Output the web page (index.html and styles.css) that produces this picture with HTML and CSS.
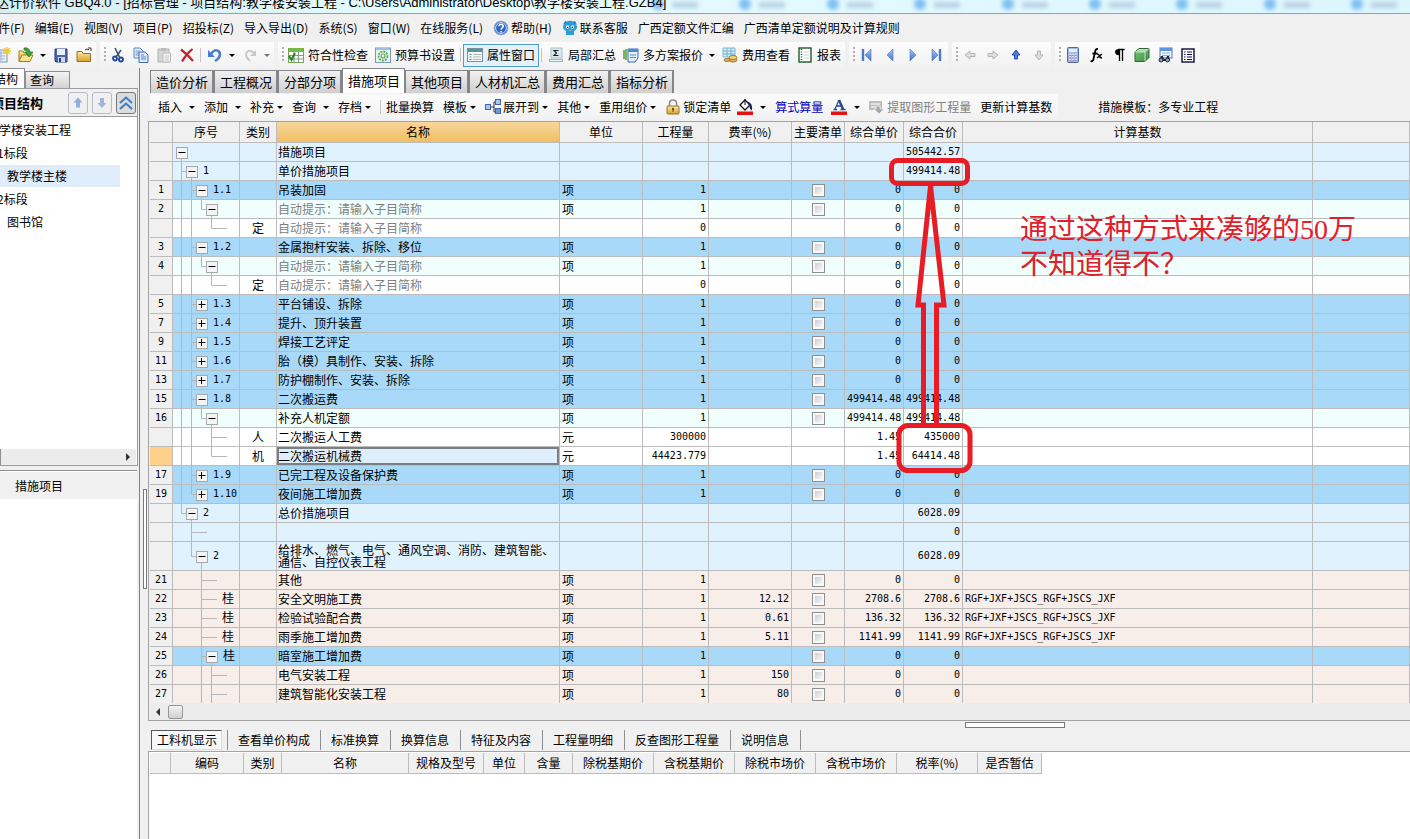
FILE: index.html
```html
<!DOCTYPE html>
<html lang="zh-CN">
<head>
<meta charset="utf-8">
<title>广联达计价软件 GBQ4.0</title>
<link rel="stylesheet" href="styles.css">
</head>
<body>
<svg class="defs" width="0" height="0" aria-hidden="true">
  <defs>
    <linearGradient id="blue" x1="0" y1="0" x2="0" y2="1"><stop offset="0" stop-color="#a9c8f5"/><stop offset="1" stop-color="#3a6fcc"/></linearGradient>
    <linearGradient id="gold" x1="0" y1="0" x2="0" y2="1"><stop offset="0" stop-color="#fbe9a0"/><stop offset="1" stop-color="#d9a02e"/></linearGradient>
    <linearGradient id="green" x1="0" y1="0" x2="1" y2="1"><stop offset="0" stop-color="#7cc47c"/><stop offset="1" stop-color="#3f8f46"/></linearGradient>
    <filter id="soft" x="-20%" y="-50%" width="140%" height="200%"><feGaussianBlur stdDeviation="2"/></filter>
    <g id="tabblur"><circle cx="8" cy="4" r="6" fill="#7fc0f2"/><rect x="22" y="2" width="26" height="6" fill="#b9d3e6"/></g>
  </defs>
</svg>

<header class="titlebar">
  <svg class="titleblur" width="780" height="13" aria-hidden="true"><g filter="url(#soft)"><use href="#tabblur" x="20"/><use href="#tabblur" x="107"/><use href="#tabblur" x="195"/><use href="#tabblur" x="282"/><use href="#tabblur" x="370"/><use href="#tabblur" x="457"/><use href="#tabblur" x="544"/><use href="#tabblur" x="632"/><use href="#tabblur" x="719"/></g></svg>
  <h1>广联达计价软件 GBQ4.0 - [招标管理 - 项目结构:教学楼安装工程 - C:\Users\Administrator\Desktop\教学楼安装工程.GZB4]</h1>
</header>

<nav class="menubar">
  <button>文件(F)</button><button>编辑(E)</button><button>视图(V)</button><button>项目(P)</button><button>招投标(Z)</button><button>导入导出(D)</button><button>系统(S)</button><button>窗口(W)</button><button>在线服务(L)</button>
  <button><svg width="16" height="16"><circle cx="8" cy="8" r="7" fill="#2f66c4" stroke="#9fb4d8"/><circle cx="8" cy="8" r="5.4" fill="none" stroke="#cfe0f8"/><path d="M6 6.3c0-2.8 4.3-2.6 4.2 0 0 1.400-2.100 1.600-2.100 3.200M8.100 11v1.500" fill="none" stroke="#fff" stroke-width="1.600"/></svg>帮助(H)</button>
  <button><svg width="16" height="16"><path d="M1 6l3-4q4-2.500 8 0l3 4q0 4-3 5v4H4v-4Q1 10 1 6z" fill="#2b9bdc"/><path d="M1 5L3 1l2 1zM15 5l-2-4-2 1z" fill="#1779b8"/><circle cx="5.500" cy="7" r="1.700" fill="#fff"/><circle cx="10.500" cy="7" r="1.700" fill="#fff"/><circle cx="5.700" cy="7.200" r=".8" fill="#123"/><circle cx="10.300" cy="7.200" r=".8" fill="#123"/><path d="M7 10h2l-1 1.500z" fill="#f6c04a"/></svg>联系客服</button>
  <button>广西定额文件汇编</button><button>广西清单定额说明及计算规则</button>
</nav>

<div class="toolbar">
  <div class="group first">
    <button aria-label="新建"><svg width="16" height="16"><rect x="2" y="3" width="10" height="12" fill="#eaf2fb" stroke="#7d93b5"/><path d="M4 6h6M4 9h6M4 12h6M6 4v10" stroke="#9db3d3"/><path d="M12 0v8M8 4h8M9 1l6 6M15 1L9 7" stroke="#f2c72e" stroke-width="1.300"/></svg></button>
    <button aria-label="打开"><svg width="16" height="16"><path d="M1 14V4h4l1 2h5v8z" fill="url(#gold)" stroke="#a97d1b"/><path d="M1 14.500L4 8h11l-3 6.500z" fill="#fbe391" stroke="#a97d1b"/><path d="M6 1q5-1 6 4h3l-4 5-4-5h2Q9 3 6 3z" fill="#3aa53a" stroke="#1d7222" stroke-width=".7"/></svg></button>
    <span class="caret"></span>
    <button aria-label="保存"><svg width="16" height="16"><path d="M2 2h12v13H3l-1-1z" fill="#4a66a8" stroke="#2a3f77"/><rect x="4" y="2" width="8" height="6" fill="#e9eefa"/><rect x="5" y="10" width="7" height="5" fill="#cdd6ea"/><rect x="6" y="11" width="2" height="4" fill="#2a3f77"/></svg></button>
    <button aria-label="关闭工程"><svg width="16" height="16"><path d="M1 14.500V4.500h5l1 2h7.500v8z" fill="url(#gold)" stroke="#94722a"/><path d="M9 3q2-2 4 0M12 1h3v3" fill="none" stroke="#333"/></svg></button>
  </div>
  <div class="group">
    <span class="grip"></span>
    <button aria-label="剪切"><svg width="16" height="16"><path d="M5 1l4.500 9M11 3L6 10" stroke="#394b6b" stroke-width="1.500" fill="none"/><circle cx="5" cy="11.500" r="2" fill="none" stroke="#1f46a0" stroke-width="1.800"/><circle cx="11" cy="12.500" r="2" fill="none" stroke="#1f46a0" stroke-width="1.800"/></svg></button>
    <button aria-label="复制"><svg width="16" height="16"><path d="M1 1h6l3 3v7H1z" fill="#e4eefb" stroke="#5f86bf"/><path d="M2.500 4h4M2.500 6h5M2.500 8h5" stroke="#6d94cd"/><path d="M6 5h6l3 3v7.500H6z" fill="#dbe9fb" stroke="#3f6cb0"/><path d="M8 8h3M8 10h5M8 12h5" stroke="#5a87c9"/></svg></button>
    <button aria-label="粘贴"><svg width="16" height="16"><rect x="2" y="2" width="11" height="13" fill="#d5d5d5" stroke="#b2b2b2"/><rect x="5" y="1" width="5" height="3" fill="#bbb"/><path d="M7 6h7.500v9H7z" fill="#f2f2f2" stroke="#bcbcbc"/><path d="M9 9h4M9 11h4M9 13h4" stroke="#c8c8c8"/></svg></button>
    <button aria-label="删除"><svg width="16" height="16"><path d="M2 2.500Q8 7 14 14M13.500 2Q7 7 3 14.500" stroke="#c8202c" stroke-width="2.200" fill="none"/></svg></button>
    <span class="sep"></span>
    <button aria-label="撤销"><svg width="16" height="16"><path d="M4 7Q8 1 12 4.500q3 5-4 9.500" fill="none" stroke="#4a7bd0" stroke-width="2.600"/><path d="M1 3v7h7z" fill="#4a7bd0"/></svg></button>
    <span class="caret"></span>
    <button aria-label="恢复"><svg width="16" height="16"><path d="M12 6Q8 2 5 5q-3 4 3 9" fill="none" stroke="#c9c9c9" stroke-width="2"/><path d="M14 3v6H8z" fill="#c9c9c9"/></svg></button>
    <span class="caret dim"></span>
  </div>
  <div class="group">
    <span class="grip"></span>
    <button><svg width="16" height="16"><rect x=".5" y="1.500" width="15" height="14" fill="#fff" stroke="#7aa35a"/><rect x="1" y="1" width="14" height="4" fill="#78b943"/><path d="M1 8.500h14M1 12h14M6 5v10M10.500 5v10" stroke="#7e9d8a"/><path d="M1 9l2.500 4L7 6" stroke="#228b22" stroke-width="2" fill="none"/></svg>符合性检查</button>
    <button><svg width="16" height="16"><rect x=".5" y="1" width="15" height="14.500" fill="#e9f5ef" stroke="#7a9ab5"/><rect x="1" y="1" width="14" height="2" fill="#9cc0e2"/><circle cx="8" cy="9" r="4.500" fill="none" stroke="#5ba75d" stroke-width="1.800" stroke-dasharray="2 1"/><circle cx="8" cy="9" r="2" fill="none" stroke="#5ba75d" stroke-width="1.200"/></svg>预算书设置</button>
    <span class="sep"></span>
    <button class="pressed" aria-pressed="true"><svg width="16" height="16"><rect x=".5" y="1.500" width="15" height="13" fill="#f7f9fa" stroke="#7b8f9e"/><rect x="1" y="2" width="14" height="3" fill="#4c9a9a"/><path d="M2.500 7.500h2M2.500 10h2M2.500 12.500h2" stroke="#4c8f60"/><path d="M6 7.500h8M6 10h8M6 12.500h8" stroke="#aab7bf"/></svg>属性窗口</button>
    <span class="sep"></span>
    <button><svg width="16" height="16"><path d="M3 1h11v10H3z" fill="#d8e9ee" stroke="#a8c4cc"/><path d="M10.500 3.500H6l2.500 2.500L6 8.500h4.500" fill="none" stroke="#222" stroke-width="1.200"/><path d="M1 12h14v3H1z" fill="#86bfcb"/><path d="M2 13.500h12" stroke="#e9f6f8"/></svg>局部汇总</button>
    <button><svg width="16" height="16"><path d="M1 3v9M3 2v11" stroke="#4f9d3b" stroke-width="1.500"/><path d="M5 2h10v9l-3 4H5z" fill="#e2eefb" stroke="#3c6ea8"/><path d="M5 2h10v3H5z" fill="#4d8bd4"/><path d="M7 8h6M7 10.500h6" stroke="#5c8ec6"/></svg>多方案报价</button>
    <span class="caret"></span>
    <button><svg width="16" height="16"><path d="M1 1h12v9H1z" fill="#d6edf6" stroke="#7db6d4"/><path d="M1 4h12M1 7h12M5 1v9M9 1v9" stroke="#6fb0d2"/><ellipse cx="11" cy="13" rx="4" ry="2" fill="#e0b45a" stroke="#a57a28"/><ellipse cx="11" cy="10.500" rx="4" ry="2" fill="#f3d487" stroke="#a57a28"/><ellipse cx="5" cy="13" rx="3" ry="1.500" fill="#e0b45a" stroke="#a57a28"/></svg>费用查看</button>
    <button><svg width="16" height="16"><rect x="2" y="1" width="12" height="14" fill="#fff" stroke="#1f5a2a" stroke-width="1.400"/><path d="M4.500 2v12" stroke="#1f5a2a" stroke-dasharray="1 1.500" stroke-width="1.500"/><path d="M7 5h5M7 8h5M7 11h5" stroke="#c8d2dc"/></svg>报表</button>
  </div>
  <div class="group">
    <span class="grip"></span>
    <button aria-label="首行"><svg width="16" height="16"><path d="M4 2v12" stroke="#4a78c8" stroke-width="2.400"/><path d="M12 2v12L6 8z" fill="url(#blue)" stroke="#5a83c8" stroke-width=".7"/></svg></button>
    <button aria-label="上一行"><svg width="16" height="16"><path d="M11 2v12L5 8z" fill="url(#blue)" stroke="#5a83c8" stroke-width=".7"/></svg></button>
    <button aria-label="下一行"><svg width="16" height="16"><path d="M5 2v12l6-6z" fill="url(#blue)" stroke="#5a83c8" stroke-width=".7"/></svg></button>
    <button aria-label="末行"><svg width="16" height="16"><path d="M12 2v12" stroke="#4a78c8" stroke-width="2.400"/><path d="M4 2v12l6-6z" fill="url(#blue)" stroke="#5a83c8" stroke-width=".7"/></svg></button>
  </div>
  <div class="group">
    <span class="grip"></span>
    <button aria-label="左移"><svg width="16" height="16"><path d="M3 8l5-4v2.500h5v3H8V12z" fill="#ddd" stroke="#b5b5b5"/></svg></button>
    <button aria-label="右移"><svg width="16" height="16"><path d="M13 8L8 4v2.500H3v3h5V12z" fill="#ddd" stroke="#b5b5b5"/></svg></button>
    <button aria-label="上移"><svg width="16" height="16"><path d="M8 3l4 5H9.500v4h-3V8H4z" fill="#4c7be0" stroke="#2a50b0"/></svg></button>
    <button aria-label="下移"><svg width="16" height="16"><path d="M8 13l4-5H9.500V4h-3v4H4z" fill="#ddd" stroke="#b5b5b5"/></svg></button>
  </div>
  <div class="group">
    <span class="grip"></span>
    <button aria-label="计算器"><svg width="16" height="16"><rect x="2.500" y=".5" width="11" height="15" rx="1" fill="#9db9e6" stroke="#4a68a6"/><rect x="4" y="2" width="8" height="3" fill="#e8f1fb"/><path d="M4.500 7.500h8M4.500 10h8M4.500 12.500h8" stroke="#fff" stroke-width="1.500" stroke-dasharray="1.500 1.300"/><path d="M4.500 8.300h8M4.500 10.800h8M4.500 13.300h8" stroke="#c24c58" stroke-width=".8" stroke-dasharray="1.500 1.300"/></svg></button>
    <button aria-label="函数"><svg width="16" height="16"><path d="M10 2Q7.500 1.500 7 5L5.500 12Q5 15 2.500 14M4.500 6.500h5" fill="none" stroke="#000" stroke-width="1.800"/><path d="M9 7q2 0 2.500 2t2.500 2M14 7l-5 4" fill="none" stroke="#000" stroke-width="1.400"/></svg></button>
    <button aria-label="段落标记"><svg width="16" height="16"><path d="M8.500 2v12M11.500 2v12M7 2.500h6.500" stroke="#000" stroke-width="1.300" fill="none"/><path d="M8.500 2v6.500Q4 8 4 5t4.500-3z"/></svg></button>
    <button aria-label="三维"><svg width="16" height="16"><path d="M1 5l4-3.500h10v9L11 14.500H1z" fill="url(#green)" stroke="#2d6a35"/><path d="M1 5h10v9.500M11 5l4-3.500" fill="none" stroke="#dff0df" stroke-width=".8"/><path d="M1.500 5L5 2h9.500L11 5z" fill="#b4dcb2"/></svg></button>
    <button aria-label="查找"><svg width="16" height="16"><rect x="3" y="1" width="12" height="10" fill="#eef5fd" stroke="#4f7cc0"/><rect x="3" y="1" width="12" height="3" fill="#5f93dc"/><path d="M5 6h8M5 8.500h8" stroke="#8fb1dc"/><path d="M2 14l2-5h2l1 3h2l1-3h2l1 5z" fill="#222a3a"/><circle cx="4" cy="13" r="2" fill="#8fa2c4" stroke="#222a3a"/><circle cx="10.500" cy="13" r="2" fill="#8fa2c4" stroke="#222a3a"/></svg></button>
    <button aria-label="列表"><svg width="16" height="16"><rect x="2" y="2" width="12" height="13" fill="#fff" stroke="#0b0b3a" stroke-width="1.400"/><path d="M4 5h1.500M4 7.500h1.500M4 10h1.500M4 12.500h1.500M7 5h5M7 7.500h5M7 10h5M7 12.500h5" stroke="#0b0b6a" stroke-width="1.200"/></svg></button>
  </div>
</div>

<div class="main">
  <aside class="sidebar">
    <div class="sidetabs"><button class="on">项目结构</button><button>查询</button></div>
    <section class="project">
      <div class="projecthead">
        <h2>项目结构</h2>
        <button aria-label="上移"><svg width="16" height="16"><path d="M8 2.500l4.500 5H10v5H6v-5H3.500z" fill="#8fb0dc"/></svg></button>
        <button aria-label="下移"><svg width="16" height="16"><path d="M8 13l4.500-5H10V3H6v5H3.500z" fill="#a3b4dc"/></svg></button>
        <button class="fold" aria-label="折叠"><svg width="16" height="16"><path d="M2 8l6-5.500L14 8M2 14l6-5.500L14 14" fill="none" stroke="#3d7fc0" stroke-width="2"/></svg></button>
      </div>
      <ul class="projecttree">
        <li class="root">教学楼安装工程</li>
        <li class="part">1标段</li>
        <li class="unit on">教学楼主楼</li>
        <li class="part">2标段</li>
        <li class="unit">图书馆</li>
      </ul>
      <div class="sidescroll"><i class="right"></i></div>
    </section>
    <section class="items"><button>措施项目</button></section>
  </aside>

  <div class="vsplit"><i></i></div>

  <main class="work">
    <div class="tabs"><button>造价分析</button><button>工程概况</button><button>分部分项</button><button class="on">措施项目</button><button>其他项目</button><button>人材机汇总</button><button>费用汇总</button><button>指标分析</button></div>
    <div class="subbar">
      <div class="commands">
        <button class="loose">插入<span class="caret"></span></button>
        <button class="loose">添加<span class="caret"></span></button>
        <button>补充<span class="caret"></span></button>
        <button class="loose">查询<span class="caret"></span></button>
        <button>存档<span class="caret"></span></button>
        <span class="sep"></span>
        <button class="plain">批量换算</button>
        <button>模板<span class="caret"></span></button>
        <button><svg width="16" height="16"><path d="M5 8h4M9 3v10M9 3h2M9 13h2" stroke="#334" fill="none"/><rect x=".5" y="5.500" width="5" height="5" fill="#a9c6ee" stroke="#3f66a8"/><rect x="10.500" y=".5" width="5" height="5" fill="#a9c6ee" stroke="#3f66a8"/><rect x="10.500" y="9.500" width="5" height="5" fill="#6f97d8" stroke="#3f66a8"/></svg>展开到<span class="caret"></span></button>
        <button>其他<span class="caret"></span></button>
        <button>重用组价<span class="caret"></span></button>
        <button><svg width="16" height="16"><path d="M4.500 7V4.500q0-3.500 3.500-3.500t3.500 3.500V7" fill="none" stroke="#8c8c8c" stroke-width="1.600"/><rect x="2" y="7" width="12" height="8" rx="1" fill="url(#gold)" stroke="#94722a"/><circle cx="8" cy="10" r="1.200" fill="#6b4c10"/><path d="M8 10v3" stroke="#6b4c10"/></svg>锁定清单</button>
        <button class="loose" aria-label="背景色"><svg width="16" height="16"><path d="M3 6l5-5 5 5-5 5z" fill="#fff" stroke="#111" stroke-width="1.300"/><path d="M8 6V0" stroke="#111"/><path d="M10 2.500q6 1 5 9-2.500-1-2.500-4z" fill="#16205c"/><rect y="12.500" width="16" height="3.500" fill="#e81010"/></svg><span class="caret"></span></button>
        <button class="formula">算式算量</button>
        <button class="loose" aria-label="文字颜色"><svg width="16" height="16"><path d="M4 10L8 1" fill="none" stroke="#27468c" stroke-width="1.200"/><path d="M8 1l4 9" fill="none" stroke="#27468c" stroke-width="2.400"/><path d="M5.500 7h5M2.500 10.500h3.500M9.500 10.500h5" fill="none" stroke="#27468c" stroke-width="1.300"/><rect y="12.500" width="16" height="3.500" fill="#e81010"/></svg><span class="caret"></span></button>
        <button class="plain" disabled><svg width="16" height="16"><path d="M0 2h13v9H0z" fill="#bdbdbd"/><path d="M2 5h9M2 8h5" stroke="#eee" stroke-width="1.500"/><path d="M7 7h4v3h4l-5 5-5-5h2z" fill="#a9a9a9" stroke="#eee" stroke-width=".8"/></svg>提取图形工程量</button>
        <button>更新计算基数</button>
      </div>
      <p>措施模板：多专业工程</p>
    </div>

    <section class="gridpane">
      <div class="gridview">
        <table class="grid">
          <colgroup><col class="w-num"><col class="w-tree"><col class="w-cat"><col class="w-name"><col class="w-unit"><col class="w-qty"><col class="w-rate"><col class="w-main"><col class="w-price"><col class="w-price"><col class="w-base"><col></colgroup>
          <thead><tr><th></th><th>序号</th><th>类别</th><th class="on">名称</th><th>单位</th><th>工程量</th><th>费率(%)</th><th>主要清单</th><th>综合单价</th><th>综合合价</th><th>计算基数</th><th></th></tr></thead>
          <tbody id="rows"></tbody>
        </table>
      </div>
      <div class="gridscroll"><i class="left"></i><b></b></div>
    </section>

    <div class="hsplit"><i></i></div>
    <div class="detailtabs"><button class="on">工料机显示</button><button>查看单价构成</button><button>标准换算</button><button>换算信息</button><button>特征及内容</button><button>工程量明细</button><button>反查图形工程量</button><button>说明信息</button></div>
    <section class="detail">
      <table>
        <colgroup><col class="d-20"><col class="d-73"><col class="d-38"><col class="d-127"><col class="d-75"><col class="d-41"><col class="d-48"><col class="d-81"><col class="d-81"><col class="d-81"><col class="d-81"><col class="d-81"><col class="d-64"></colgroup>
        <thead><tr><th></th><th>编码</th><th>类别</th><th>名称</th><th>规格及型号</th><th>单位</th><th>含量</th><th>除税基期价</th><th>含税基期价</th><th>除税市场价</th><th>含税市场价</th><th>税率(%)</th><th>是否暂估</th></tr></thead>
      </table>
    </section>
  </main>
</div>

<svg class="marks" width="84" height="317" aria-hidden="true">
  <g fill="none" stroke="#e81c24" stroke-width="5">
    <rect x="2.500" y="2.500" width="76" height="23" rx="6"/>
    <rect x="10" y="267.500" width="71" height="45" rx="9"/>
    <path d="M41.500 28L29 147h5.500v119M41.500 28L55 147h-7.500v119"/>
  </g>
</svg>
<p class="note">通过这种方式来凑够的50万<br>不知道得不？</p>
<script src="grid.js"></script>
</body>
</html>
```
FILE: styles.css
```css
* { box-sizing: border-box; }
body {
  margin: 0;
  height: 100vh;
  display: flex;
  flex-direction: column;
  position: relative;
  overflow: hidden;
  background: #f0f0f0;
  color: #000;
  font: 12px/18px "Noto Sans CJK SC", sans-serif;
}
button {
  font: inherit;
  color: inherit;
  background: none;
  border: 0;
  padding: 0;
  white-space: nowrap;
}
h1, h2, p, ul { margin: 0; padding: 0; }
svg { display: block; flex: none; }
.defs { position: absolute; }

.titlebar {
  flex: none;
  display: flex;
  height: 14px;
  overflow: hidden;
  position: relative;
  background: linear-gradient(90deg, #d5eef0, #e6fbfd 30%, #dcf6fd);
  border-bottom: 1px solid #8fa3ae;
}
.titleblur { position: absolute; right: 0; top: 0; }
.titlebar h1 {
  position: relative;
  margin-left: -30px;
  white-space: nowrap;
  font: 13px/6px "Liberation Sans", "Noto Sans CJK SC", sans-serif;
}

.menubar {
  flex: none;
  display: flex;
  align-items: center;
  gap: 10px;
  height: 28px;
  margin-left: -14px;
}
.menubar button { display: flex; align-items: center; gap: 2px; }

.toolbar { flex: none; display: flex; height: 26px; gap: 4px; }
.group {
  display: flex;
  align-items: center;
  padding-right: 1px;
  background: linear-gradient(#fcfcfc, #f1f1f1);
}
.group.first { margin-left: -9px; }
.group button {
  display: flex;
  align-items: center;
  gap: 4px;
  height: 24px;
  padding: 0 3px 0 4px;
}
.group button.pressed {
  height: 23px;
  background: #e2f1fb;
  border: 1px solid #4f9ace;
  padding: 0 3px;
}
.caret { display: flex; justify-content: center; width: 12px; }
.caret::after {
  content: "";
  border: 3px solid transparent;
  border-top-color: #000;
  border-bottom: 0;
}
.caret.dim::after { border-top-color: #777; }
.grip { display: flex; justify-content: flex-end; width: 6px; height: 16px; }
.grip::after {
  content: "";
  width: 2px;
  background: repeating-linear-gradient(#b0b0b0 0 2px, transparent 2px 4px);
}
.sep { display: flex; justify-content: center; width: 5px; height: 14px; }
.sep::after { content: ""; width: 1px; background: #c4c4c4; }

.main { flex: 1; min-height: 0; display: flex; }

.sidebar {
  width: 140px;
  flex: none;
  display: flex;
  flex-direction: column;
  overflow: hidden;
  border-right: 1px solid #7f8287;
}
.sidetabs { display: flex; align-items: flex-end; height: 20px; margin-left: -35px; }
.sidetabs button {
  height: 17px;
  padding: 0 4px;
  line-height: 16px;
  text-align: left;
  border: 1px solid #8e8f93;
  border-bottom: 0;
  background: linear-gradient(#f3f3f3, #d2d2d2);
}
.sidetabs button:last-child { width: 45px; }
.sidetabs .on { height: 20px; width: 60px; line-height: 17px; background: #fff; }
.project {
  flex: none;
  height: 378px;
  margin-right: 1px;
  display: flex;
  flex-direction: column;
  background: #fff;
  border: solid #9c9c9c;
  border-width: 1px 1px 1px 0;
}
.projecthead {
  display: flex;
  align-items: center;
  gap: 4px;
  height: 28px;
  margin-left: -9px;
  padding-right: 1px;
  background: #f0f0f0;
  border-bottom: 1px solid #9c9c9c;
}
.projecthead h2 { flex: 1; font-size: 13px; line-height: 20px; }
.projecthead button {
  width: 20px;
  height: 22px;
  display: grid;
  place-items: center;
  border: 1px solid #b9bcc6;
  border-radius: 3px;
}
.projecthead .fold { border-color: #77797e; background: #dcdcdc; }
.projecttree { flex: 1; list-style: none; padding: 2px 0; }
.projecttree li { height: 22px; line-height: 22px; margin: 0 17px 1px 0; white-space: nowrap; }
.projecttree .root { text-indent: -13px; }
.projecttree .part { text-indent: -3px; }
.projecttree .unit { text-indent: 7px; }
.projecttree .on { background: #dfedfb; }
.sidescroll {
  display: flex;
  align-items: center;
  justify-content: flex-end;
  height: 16px;
  padding-right: 6px;
  margin-right: 1px;
  background: #ececec;
  border-left: 1px solid #8e8f93;
}
i.right, i.left { border: 4px solid transparent; }
i.right { border-left-color: #333; border-right: 0; }
i.left { border-right-color: #333; border-left: 0; }
.items {
  flex: 1;
  margin: 4px 2px 0 0;
  padding-top: 1px;
  background: #fff;
  border-top: 1px solid #8e8f93;
}
.items button { display: block; width: 100%; height: 27px; padding-left: 15px; text-align: left; background: #f0f0f0; }

.vsplit { width: 8px; flex: none; display: flex; align-items: center; justify-content: flex-end; padding: 0 1px 0 0; }
.vsplit i { width: 4px; height: 100px; margin-top: 170px; background: #fff; border: 1px solid #77797e; }

.work { flex: 1; min-width: 0; display: flex; flex-direction: column; }
.tabs { flex: none; display: flex; align-items: flex-end; height: 25px; padding-left: 2px; }
.tabs button {
  height: 23px;
  padding: 0 4px 0 5px;
  font-size: 13px;
  line-height: 22px;
  border: 1px solid #85868a;
  border-bottom: 0;
  border-right-width: 2px;
  background: linear-gradient(#f1f1f1, #cfcfcf);
}
.tabs button.on { height: 25px; border-right-width: 1px; background: #fff; }
.subbar { flex: none; display: flex; align-items: center; gap: 40px; height: 28px; padding-left: 2px; }
.commands {
  display: flex;
  align-items: center;
  height: 26px;
  padding-left: 8px;
  background: linear-gradient(#fcfcfc, #f1f1f1);
}
.commands button { display: flex; align-items: center; padding-right: 6px; }
.commands .loose .caret { margin-left: 4px; }
.commands .plain { padding-right: 9px; }
.commands svg { margin-right: 2px; }
.commands .loose svg { margin-right: 0; }
.commands .formula { color: #0000c0; padding-right: 8px; }
.commands button:disabled { color: #808080; }
.commands .sep { width: 6px; justify-content: flex-start; }

.gridpane {
  flex: none;
  border: solid #a3a3a3;
  border-width: 1px 0 1px 1px;
  padding-left: 1px;
}
.gridview { height: 581px; overflow: hidden; }
.grid { width: 100%; table-layout: fixed; border-spacing: 0; }
.grid th, .grid td {
  height: 19px;
  padding: 0 2px;
  line-height: 18px;
  border: solid #bcbcbc;
  border-width: 0 1px 1px 0;
  white-space: nowrap;
}
.grid th { font-weight: 400; background: #f0f0f0; text-align: center; padding: 0; }
.grid thead th { height: 21px; line-height: 20px; }
.grid thead .on { background: linear-gradient(#f9d69c, #efbf62); }
.w-num { width: 23px; }
.w-tree { width: 67px; }
.w-cat { width: 37px; }
.w-name { width: 283px; }
.w-unit, .w-rate { width: 83px; }
.w-qty { width: 66px; }
.w-main { width: 53px; }
.w-price { width: 59px; }
.w-base { width: 350px; }
.grid tbody th, .grid .n, .grid .code, .grid .tree { font-family: "DejaVu Sans Mono", "Noto Sans CJK SC", monospace; font-size: 10px; }
.grid .n { text-align: right; }
.grid .cat, .grid .tick { text-align: center; }
.grid .name { padding-left: 1px; }
.grid .hint { color: #808080; }
.grid .tree { padding: 0; }
.tree div { display: flex; align-items: center; gap: 5px; }
.tree .cjk { font-size: 12px; }
.lines { fill: none; stroke: #b3b7ba; }
.lines rect { fill: #f4f4f4; stroke: #a9a9a9; }
.lines .sign { stroke: #000; }
.top { background: #e1f2ff; }
.item { background: #a8d9f9; }
.sub { background: #f0fffb; }
.leaf { background: #fff; }
.rate { background: #f7eee9; }
.grid .double td, .grid .double th { height: 29px; line-height: 12px; }
.grid .current th { background: #ffd08a; }
.grid .current .name { background: #dfeefb; box-shadow: 0 0 0 2px #7b7f84 inset; }
.tick input {
  appearance: none;
  display: block;
  width: 13px;
  height: 13px;
  margin: 0 auto;
  padding: 2px;
  border: 1px solid #8e8f8f;
  background: linear-gradient(135deg, #cbcfd5, #f6f6f6) content-box, linear-gradient(#f8f8f8, #f8f8f8);
}
.gridscroll { display: flex; align-items: center; height: 17px; padding-left: 6px; gap: 8px; background: #ececec; }
.gridscroll b { width: 15px; height: 14px; border: 1px solid #979797; border-radius: 2px; background: linear-gradient(#f3f3f3, #cfcfcf); }

.hsplit { flex: none; display: flex; justify-content: flex-end; height: 7px; padding: 1px 345px 0 0; }
.hsplit i { width: 100px; height: 6px; background: #fff; border: 1px solid #77797e; }
.detailtabs { flex: none; display: flex; align-items: center; height: 23px; padding-left: 3px; }
.detailtabs button { height: 20px; padding: 0 11px 0 10px; border-right: 1px solid #8e8f93; }
.detailtabs .on {
  padding: 0 4px 0 5px;
  margin-right: 5px;
  background: #f8f8f8;
  border: 1px solid #55575c;
  border-right-color: #ddd;
  border-bottom-color: #ddd;
}
.detailtabs .on + button { border-left: 1px solid #8e8f93; padding-right: 10px; }
.detail { flex: 1; background: #fff; border: solid #a3a3a3; border-width: 1px 0 0 1px; padding: 1px 0 0 1px; }
.detail table { table-layout: fixed; width: 892px; border-spacing: 0; }
.detail th {
  height: 21px;
  padding: 0;
  line-height: 20px;
  font-weight: 400;
  background: #f0f0f0;
  border: solid #bcbcbc;
  border-width: 0 1px 1px 0;
}
.d-20 { width: 21px; }
.d-73 { width: 73px; }
.d-38 { width: 38px; }
.d-127 { width: 127px; }
.d-75 { width: 75px; }
.d-41 { width: 41px; }
.d-48 { width: 48px; }
.d-81 { width: 81px; }
.d-64 { width: 64px; }

.marks { position: absolute; left: 889px; top: 158px; }
.note {
  position: absolute;
  left: 1020px;
  top: 212px;
  color: #e0202a;
  font: 28px/35px "Liberation Serif", "Noto Sans CJK SC", serif;
  white-space: nowrap;
}
```
FILE: grid.js
```js
const HINT = "自动提示：请输入子目简称";
// style, row number, depth, node (- open, + closed, . leaf), label, category, name, unit, quantity, rate, tick box, unit price, total, base
const data = [
  ["top", "", 0, "-", "", "", "措施项目", "", "", "", 0, "", "505442.57"],
  ["top", "", 1, "-", "1", "", "单价措施项目", "", "", "", 0, "", "499414.48"],
  ["item", 1, 2, "-", "1.1", "", "吊装加固", "项", 1, "", 1, 0, 0],
  ["sub", 2, 3, "-", "", "", HINT, "项", 1, "", 1, 0, 0],
  ["leaf", "", 4, ".", "", "定", HINT, "", 0, "", 0, 0, 0],
  ["item", 3, 2, "-", "1.2", "", "金属抱杆安装、拆除、移位", "项", 1, "", 1, 0, 0],
  ["sub", 4, 3, "-", "", "", HINT, "项", 1, "", 1, 0, 0],
  ["leaf", "", 4, ".", "", "定", HINT, "", 0, "", 0, 0, 0],
  ["item", 5, 2, "+", "1.3", "", "平台铺设、拆除", "项", 1, "", 1, 0, 0],
  ["item", 7, 2, "+", "1.4", "", "提升、顶升装置", "项", 1, "", 1, 0, 0],
  ["item", 9, 2, "+", "1.5", "", "焊接工艺评定", "项", 1, "", 1, 0, 0],
  ["item", 11, 2, "+", "1.6", "", "胎（模）具制作、安装、拆除", "项", 1, "", 1, 0, 0],
  ["item", 13, 2, "+", "1.7", "", "防护棚制作、安装、拆除", "项", 1, "", 1, 0, 0],
  ["item", 15, 2, "-", "1.8", "", "二次搬运费", "项", 1, "", 1, "499414.48", "499414.48"],
  ["sub", 16, 3, "-", "", "", "补充人机定额", "项", 1, "", 1, "499414.48", "499414.48"],
  ["leaf", "", 4, ".", "", "人", "二次搬运人工费", "元", "300000", "", 0, "1.45", "435000"],
  ["leaf current", "", 4, ".", "", "机", "二次搬运机械费", "元", "44423.779", "", 0, "1.45", "64414.48"],
  ["item", 17, 2, "+", "1.9", "", "已完工程及设备保护费", "项", 1, "", 1, 0, 0],
  ["item", 19, 2, "+", "1.10", "", "夜间施工增加费", "项", 1, "", 1, 0, 0],
  ["top", "", 1, "-", "2", "", "总价措施项目", "", "", "", 0, "", "6028.09"],
  ["top", "", 2, ".", "", "", "", "", "", "", 0, "", 0],
  ["top double", "", 2, "-", "2", "", "给排水、燃气、电气、通风空调、消防、建筑智能、<br>通信、自控仪表工程", "", "", "", 0, "", "6028.09"],
  ["rate", 21, 3, ".", "", "", "其他", "项", 1, "", 1, 0, 0],
  ["rate", 22, 3, ".", "桂", "", "安全文明施工费", "项", 1, "12.12", 1, "2708.6", "2708.6", "RGF+JXF+JSCS_RGF+JSCS_JXF"],
  ["rate", 23, 3, ".", "桂", "", "检验试验配合费", "项", 1, "0.61", 1, "136.32", "136.32", "RGF+JXF+JSCS_RGF+JSCS_JXF"],
  ["rate", 24, 3, ".", "桂", "", "雨季施工增加费", "项", 1, "5.11", 1, "1141.99", "1141.99", "RGF+JXF+JSCS_RGF+JSCS_JXF"],
  ["item", 25, 3, "-", "桂", "", "暗室施工增加费", "项", 1, "", 1, 0, 0],
  ["rate", 26, 4, ".", "", "", "电气安装工程", "项", 1, "150", 1, 0, 0],
  ["rate", 27, 4, ".", "", "", "建筑智能化安装工程", "项", 1, "80", 1, 0, 0],
];

// True when another row of this depth follows under the same parent.
function continues(index, depth) {
  for (let j = index + 1; j < data.length; j++) {
    if (data[j][2] < depth) return false;
    if (data[j][2] === depth) return true;
  }
  return depth > 2;
}

function treeLines(index) {
  const depth = data[index][2], node = data[index][3];
  const h = data[index][0].includes("double") ? 28 : 18;
  const mid = h / 2 + 0.5;
  const x = k => 8.5 + 10 * k;
  let path = "";
  for (let k = 0; k < depth; k++) {
    const more = continues(index, k + 1);
    if (more) path += `M${x(k)} 0V${h}`;
    else if (k === depth - 1) path += `M${x(k)} 0V${mid}`;
  }
  if (depth) path += `M${x(depth - 1)} ${mid}h${node === "." ? 16 : 6}`;
  if (node === "-") path += `M${x(depth)} ${mid + 6}V${h}`;
  const c = x(depth);
  const box = node === "." ? "" :
    `<rect x="${c - 5}" y="${mid - 5}" width="11" height="11"/><path class="sign" d="M${c - 3} ${mid}h7${node === "+" ? `M${c} ${mid - 3.5}v7` : ""}"/>`;
  const width = node === "." ? 10 * depth + 14 : 10 * depth + 15;
  return `<svg class="lines" width="${width}" height="${h}"><path d="${path}"/>${box}</svg>`;
}

document.getElementById("rows").innerHTML = data.map((r, i) => {
  const [style, num, , , label, cat, name, unit, qty, rate, tick, price, total, base = ""] = r;
  const labelClass = label === "桂" ? "cjk" : "";
  return `<tr class="${style}"><th>${num}</th>` +
    `<td class="tree"><div>${treeLines(i)}<span class="${labelClass}">${label}</span></div></td>` +
    `<td class="cat">${cat}</td><td class="name${name === HINT ? " hint" : ""}">${name}</td><td>${unit}</td>` +
    `<td class="n">${qty}</td><td class="n">${rate}</td>` +
    `<td class="tick">${tick ? `<input type="checkbox" aria-label="主要清单 ${num}">` : ""}</td>` +
    `<td class="n">${price}</td><td class="n">${total}</td><td class="code">${base}</td><td></td></tr>`;
}).join("");
```
